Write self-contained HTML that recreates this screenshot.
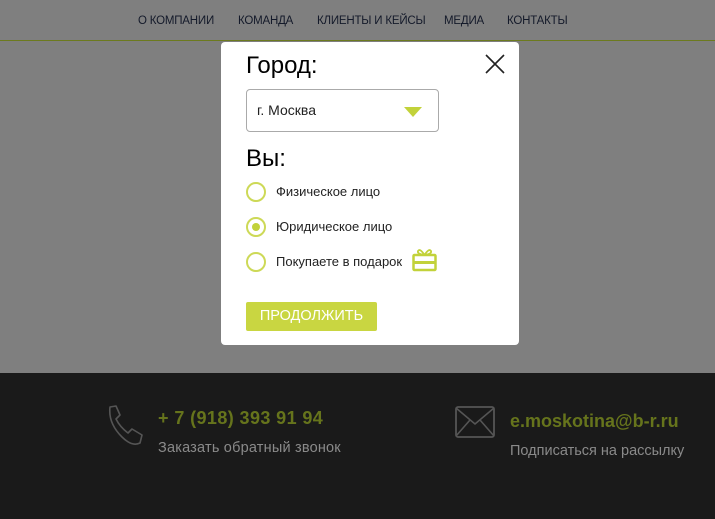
<!DOCTYPE html>
<html><head><meta charset="utf-8"><style>
*{margin:0;padding:0;box-sizing:border-box}
body{width:715px;height:519px;overflow:hidden;background:#7f7f7f;font-family:"Liberation Sans","DejaVu Sans",sans-serif;position:relative}
.nav{position:absolute;top:0;left:0;width:715px;height:41px;border-bottom:1px solid #6c7a1e}
.nav span{position:absolute;top:15px;font-size:11.5px;color:#141a2a;letter-spacing:-0.2px}
.foot{position:absolute;top:373px;left:0;width:715px;height:146px;background:#1a1a1a}
.modal{position:absolute;left:221px;top:42px;width:298px;height:303px;background:#fff;border-radius:4px}
.h{position:absolute;left:25px;font-size:24px;color:#000}
.sel{position:absolute;left:25px;top:47px;width:193px;height:43px;border:1px solid #aaa;border-radius:4px}
.sel span{position:absolute;left:10px;top:12px;font-size:14px;color:#222}
.tri{position:absolute;left:157px;top:17px;width:0;height:0;border-left:9px solid transparent;border-right:9px solid transparent;border-top:10px solid #c2d23a}
.r{position:absolute;left:25px;width:20px;height:20px;border:2px solid #cdd957;border-radius:50%}
.r.on::after{content:"";position:absolute;left:4px;top:4px;width:8px;height:8px;border-radius:50%;background:#c2d23a}
.lab{position:absolute;left:55px;font-size:13px;color:#222}
.btn{position:absolute;left:25px;top:260px;width:131px;height:29px;background:#c9d641;border-radius:2px;color:#fff;font-size:14.5px;text-align:center;line-height:29px}
.g{position:absolute;font-weight:bold;font-size:18px;color:#66741c}
.gr{position:absolute;font-size:14.5px;color:#8a8a8a}
</style></head><body>
<div class="nav">
<span style="left:138px">О КОМПАНИИ</span>
<span style="left:238px">КОМАНДА</span>
<span style="left:317px">КЛИЕНТЫ И КЕЙСЫ</span>
<span style="left:444px">МЕДИА</span>
<span style="left:507px">КОНТАКТЫ</span>
</div>
<div class="foot">
<svg style="position:absolute;left:104px;top:32px" width="44" height="42" viewBox="0 0 44 42"><path d="M6 2 L12 1 L16 10 L12 14 Q16 22 24 28 L28 24 L38 30 L36 38 Q28 42 18 32 Q4 18 6 2 Z" fill="none" stroke="#555" stroke-width="1.6" stroke-linejoin="round"/></svg>
<div class="g" style="left:158px;top:35px;letter-spacing:0.4px">+ 7 (918) 393 91 94</div>
<div class="gr" style="left:158px;top:67px;letter-spacing:0.2px">Заказать обратный звонок</div>
<svg style="position:absolute;left:455px;top:33px" width="40" height="32" viewBox="0 0 40 32"><rect x="1" y="1" width="38" height="30" rx="2" fill="none" stroke="#555" stroke-width="1.8"/><path d="M1 2 L20 18 L39 2 M1 30 L15 14 M39 30 L25 14" fill="none" stroke="#555" stroke-width="1.6"/></svg>
<div class="g" style="left:510px;top:38px">e.moskotina@b-r.ru</div>
<div class="gr" style="left:510px;top:70px">Подписаться на рассылку</div>
</div>
<div class="modal">
<div class="h" style="top:10px">Город:</div>
<svg style="position:absolute;left:264px;top:12px" width="20" height="20" viewBox="0 0 20 20"><path d="M1 1 L19 19 M19 1 L1 19" stroke="#222" stroke-width="1.6"/></svg>
<div class="sel"><span>г. Москва</span><div class="tri"></div></div>
<div class="h" style="top:103px">Вы:</div>
<div class="r" style="top:140px"></div><div class="lab" style="top:142px">Физическое лицо</div>
<div class="r on" style="top:175px"></div><div class="lab" style="top:177px">Юридическое лицо</div>
<div class="r" style="top:210px"></div><div class="lab" style="top:212px">Покупаете в подарок</div>
<svg style="position:absolute;left:191px;top:206px" width="25" height="24" viewBox="0 0 25 24"><rect x="1.5" y="7" width="22" height="15" rx="1" fill="none" stroke="#c2d23a" stroke-width="2.5"/><rect x="2" y="13" width="21" height="3" fill="#c2d23a"/><path d="M12.5 7 Q8 0 6 3 Q5 6 12.5 7 Q17 0 19 3 Q20 6 12.5 7" fill="none" stroke="#c2d23a" stroke-width="1.8"/></svg>
<div class="btn">ПРОДОЛЖИТЬ</div>
</div>
</body></html>
